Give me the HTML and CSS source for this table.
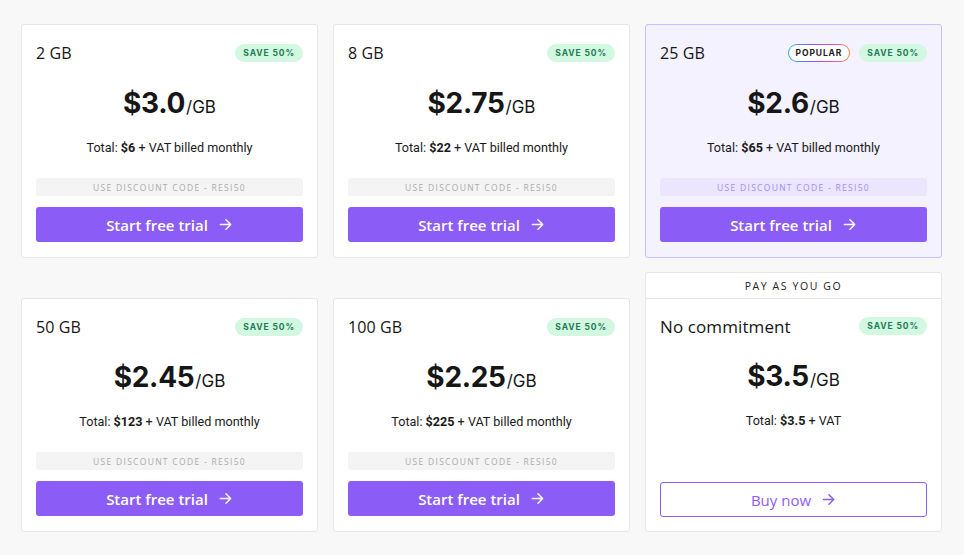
FILE: index.html
```html
<!DOCTYPE html>
<html lang="en">
<head>
<meta charset="utf-8">
<title>Pricing</title>
<link rel="stylesheet" href="styles.css">
</head>
<body>
<main class="grid">
  <div class="card">
    <div class="head"><span class="plan">2 GB</span><span class="badges"><span class="save">SAVE 50%</span></span></div>
    <div class="price"><span class="amount">$3.0</span><span class="unit">/GB</span></div>
    <p class="total">Total: <b>$6</b> + VAT billed monthly</p>
    <div class="code">USE DISCOUNT CODE - RESI50</div>
    <a class="btn">Start free trial <svg class="arrow" viewBox="0 0 16 16"><path d="M2.5 8h11M8.5 3l5 5-5 5"/></svg></a>
  </div>
  <div class="card">
    <div class="head"><span class="plan">8 GB</span><span class="badges"><span class="save">SAVE 50%</span></span></div>
    <div class="price"><span class="amount">$2.75</span><span class="unit">/GB</span></div>
    <p class="total">Total: <b>$22</b> + VAT billed monthly</p>
    <div class="code">USE DISCOUNT CODE - RESI50</div>
    <a class="btn">Start free trial <svg class="arrow" viewBox="0 0 16 16"><path d="M2.5 8h11M8.5 3l5 5-5 5"/></svg></a>
  </div>
  <div class="card popular">
    <div class="head"><span class="plan">25 GB</span><span class="badges"><span class="pop"><span class="pop-in">POPULAR</span></span><span class="save">SAVE 50%</span></span></div>
    <div class="price"><span class="amount">$2.6</span><span class="unit">/GB</span></div>
    <p class="total">Total: <b>$65</b> + VAT billed monthly</p>
    <div class="code">USE DISCOUNT CODE - RESI50</div>
    <a class="btn">Start free trial <svg class="arrow" viewBox="0 0 16 16"><path d="M2.5 8h11M8.5 3l5 5-5 5"/></svg></a>
  </div>
  <div class="card">
    <div class="head"><span class="plan">50 GB</span><span class="badges"><span class="save">SAVE 50%</span></span></div>
    <div class="price"><span class="amount">$2.45</span><span class="unit">/GB</span></div>
    <p class="total">Total: <b>$123</b> + VAT billed monthly</p>
    <div class="code">USE DISCOUNT CODE - RESI50</div>
    <a class="btn">Start free trial <svg class="arrow" viewBox="0 0 16 16"><path d="M2.5 8h11M8.5 3l5 5-5 5"/></svg></a>
  </div>
  <div class="card">
    <div class="head"><span class="plan">100 GB</span><span class="badges"><span class="save">SAVE 50%</span></span></div>
    <div class="price"><span class="amount">$2.25</span><span class="unit">/GB</span></div>
    <p class="total">Total: <b>$225</b> + VAT billed monthly</p>
    <div class="code">USE DISCOUNT CODE - RESI50</div>
    <a class="btn">Start free trial <svg class="arrow" viewBox="0 0 16 16"><path d="M2.5 8h11M8.5 3l5 5-5 5"/></svg></a>
  </div>
  <div class="card payg">
    <div class="payg-title">PAY AS YOU GO</div>
    <div class="payg-body">
      <div class="head"><span class="plan">No commitment</span><span class="badges"><span class="save">SAVE 50%</span></span></div>
      <div class="price"><span class="amount">$3.5</span><span class="unit">/GB</span></div>
      <p class="total">Total: <b>$3.5</b> + VAT</p>
      <div class="spacer"></div>
      <a class="btn outline">Buy now <svg class="arrow" viewBox="0 0 16 16"><path d="M2.5 8h11M8.5 3l5 5-5 5"/></svg></a>
    </div>
  </div>
</main>
</body>
</html>
```
FILE: styles.css
```css
* { box-sizing: border-box; }
html, body { margin: 0; padding: 0; }
body {
  background: #f8f8f8;
  font-family: "Open Sans", "Liberation Sans", sans-serif;
  color: #161616;
}
.grid {
  display: grid;
  grid-template-columns: repeat(3, 297px);
  grid-template-rows: 234px 260px;
  column-gap: 15px;
  row-gap: 14px;
  padding: 24px 0 0 21px;
}
.card {
  background: #fff;
  border: 1px solid #e6e6e6;
  border-radius: 3px;
  padding: 14px 14px 14px;
  display: flex;
  flex-direction: column;
  height: 234px;
  align-self: end;
}
.card.popular {
  background: #f4f2ff;
  border-color: #c9bdfb;
}
.head {
  display: flex;
  justify-content: space-between;
  align-items: center;
  height: 28px;
}
.plan {
  font-size: 16px;
  font-weight: 500;
  letter-spacing: 0.1px;
}
.badges { display: flex; gap: 9px; }
.save {
  display: inline-flex;
  align-items: center;
  height: 18px;
  padding: 0 8px;
  border-radius: 9px;
  background: #d2f8e2;
  color: #1f7b52;
  font-family: "Inter", sans-serif;
  font-size: 8.5px;
  font-weight: 700;
  letter-spacing: 0.9px;
}
.pop {
  display: inline-flex;
  height: 18px;
  padding: 1px;
  border-radius: 9px;
  background: linear-gradient(90deg, #1fb6e8, #7b5cf6 40%, #e54ccf 70%, #f7873a);
}
.pop-in {
  display: inline-flex;
  align-items: center;
  padding: 0 7px;
  border-radius: 8px;
  background: #fff;
  color: #1b1b1b;
  font-family: "Inter", sans-serif;
  font-size: 8.5px;
  font-weight: 700;
  letter-spacing: 0.9px;
}
.price {
  display: flex;
  justify-content: center;
  align-items: baseline;
  margin-top: 19px;
  height: 36px;
  font-family: "Inter", "Liberation Sans", sans-serif;
}
.amount {
  font-size: 28px;
  font-weight: 700;
  letter-spacing: -0.3px;
}
.unit {
  font-size: 17px;
  font-weight: 400;
  margin-left: 1px;
}
.total {
  margin: 18px 0 0;
  text-align: center;
  font-family: "Roboto", sans-serif;
  font-size: 12.6px;
  color: #1a1a1a;
}
.total b { font-weight: 700; }
.code {
  margin-top: 23px;
  height: 18px;
  border-radius: 3px;
  background: #f4f4f4;
  color: #ababab;
  font-size: 8.5px;
  font-weight: 500;
  letter-spacing: 1.3px;
  display: flex;
  align-items: center;
  justify-content: center;
}
.popular .code {
  background: #ebe6fd;
  color: #a58cf6;
}
.btn {
  margin-top: 11px;
  height: 35px;
  border-radius: 3px;
  background: #8b5cf6;
  color: #fff;
  font-size: 15px;
  font-weight: 600;
  display: flex;
  align-items: center;
  justify-content: center;
  gap: 10px;
  cursor: pointer;
}
.arrow {
  width: 15px;
  height: 15px;
  fill: none;
  stroke: currentColor;
  stroke-width: 1.6;
  stroke-linecap: round;
  stroke-linejoin: round;
}
.card.payg {
  height: 260px;
  padding: 0;
}
.payg-title {
  height: 26px;
  border-bottom: 1px solid #e6e6e6;
  display: flex;
  align-items: center;
  justify-content: center;
  font-size: 10.5px;
  font-weight: 500;
  letter-spacing: 1.6px;
  color: #222;
}
.payg-body {
  flex: 1;
  padding: 13px 14px 14px;
  display: flex;
  flex-direction: column;
}
.payg-body .plan { font-size: 17px; }
.spacer { flex: 1; }
.btn.outline {
  background: #fff;
  color: #8b5cf6;
  border: 1px solid #8b5cf6;
  font-weight: 500;
}
```
